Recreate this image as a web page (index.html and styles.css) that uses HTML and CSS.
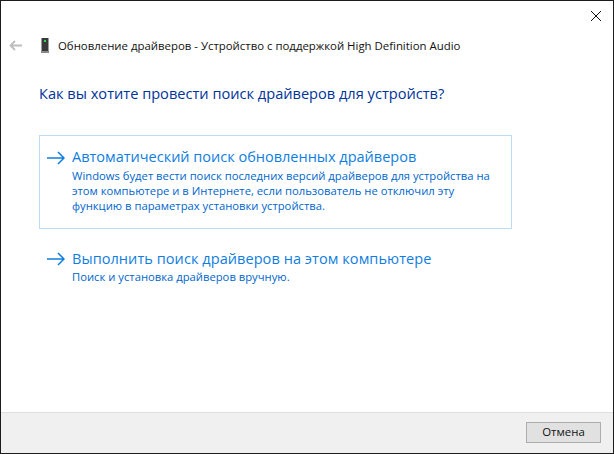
FILE: index.html
```html
<!DOCTYPE html>
<html lang="ru">
<head>
<meta charset="utf-8">
<title>Обновление драйверов</title>
<link rel="stylesheet" href="styles.css">
</head>
<body>
<div class="window">
  <div class="titlebar">
    <svg class="close" width="10" height="10" viewBox="0 0 10 10"><path d="M0 0L10 10M10 0L0 10" stroke="#111" stroke-width="1" fill="none"/></svg>
  </div>
  <div class="nav">
    <svg class="back" width="13" height="11" viewBox="0 0 13 11"><path d="M13 5.5H1.5M6 1L1.5 5.5L6 10" stroke="#bdbdbd" stroke-width="1.8" fill="none"/></svg>
    <svg class="device" width="8" height="15" viewBox="0 0 8 15"><rect x="0.5" y="0" width="7" height="13" fill="#3a3a3a"/><rect x="3" y="2" width="2" height="2" fill="#22e04a"/><rect x="0" y="13" width="8" height="2" fill="#8a8a8a"/></svg>
    <span class="nav-title">Обновление драйверов - Устройство с поддержкой High Definition Audio</span>
  </div>
  <main class="content">
    <h1 class="heading">Как вы хотите провести поиск драйверов для устройств?</h1>
    <a class="option option-active">
      <svg class="arrow" width="18" height="14" viewBox="0 0 18 14"><path d="M0 7H17M11 1L17 7L11 13" stroke="#0f7ee0" stroke-width="1.5" fill="none"/></svg>
      <div class="option-text">
        <div class="option-title">Автоматический поиск обновленных драйверов</div>
        <div class="option-desc">Windows будет вести поиск последних версий драйверов для устройства на этом компьютере и в Интернете, если пользователь не отключил эту функцию в параметрах установки устройства.</div>
      </div>
    </a>
    <a class="option">
      <svg class="arrow" width="18" height="14" viewBox="0 0 18 14"><path d="M0 7H17M11 1L17 7L11 13" stroke="#0f7ee0" stroke-width="1.5" fill="none"/></svg>
      <div class="option-text">
        <div class="option-title">Выполнить поиск драйверов на этом компьютере</div>
        <div class="option-desc">Поиск и установка драйверов вручную.</div>
      </div>
    </a>
  </main>
  <footer class="footer">
    <button class="cancel">Отмена</button>
  </footer>
</div>
</body>
</html>
```
FILE: styles.css
```css
* { box-sizing: border-box; }
html, body { margin: 0; padding: 0; height: 100%; }
body { font-family: "Open Sans", "Noto Sans", sans-serif; background: #fff; }
.window {
  width: 614px;
  height: 454px;
  border: 1px solid #1c1c1c;
  display: flex;
  flex-direction: column;
  background: #fff;
}
.titlebar {
  height: 29px;
  display: flex;
  justify-content: flex-end;
  align-items: flex-start;
  padding: 10px 12px 0 0;
}
.nav {
  height: 30px;
  display: flex;
  align-items: center;
  padding-left: 8px;
}
.back { margin-right: 19px; }
.device { margin-right: 9px; }
.nav-title { font-size: 11.4px; color: #111; white-space: nowrap; }
.content { flex: 1; padding: 0 0 0 38px; }
.heading {
  margin: 22px 0 0 0;
  font-size: 14.6px;
  font-weight: 400;
  line-height: 22px;
  color: #003399;
}
.option {
  display: flex;
  width: 473px;
  height: 94px;
  padding: 10px 8px 0 7px;
  border: 1px solid transparent;
}
.option-active { margin-top: 31px; border-color: #bcdcf4; }
.option + .option { margin-top: 7px; }
.arrow { margin: 5px 7px 0 0; flex: none; }
.option-title { font-size: 14.5px; line-height: 22px; color: #0f7ee0; }
.option + .option .option-title { margin: 1px 0 -1px; letter-spacing: 0.07px; }
.option-desc { font-size: 11.25px; line-height: 15px; color: #0066cc; }
.footer {
  height: 41px;
  background: #f0f0f0;
  border-top: 1px solid #dfdfdf;
  display: flex;
  justify-content: flex-end;
  align-items: flex-start;
  padding: 9px 12px 0 0;
}
.cancel {
  width: 75px;
  height: 21px;
  border: 1px solid #adadad;
  background: #e1e1e1;
  font: 11.4px "Open Sans", "Noto Sans", sans-serif;
  color: #111;
  padding: 0 0 2px;
}
```
